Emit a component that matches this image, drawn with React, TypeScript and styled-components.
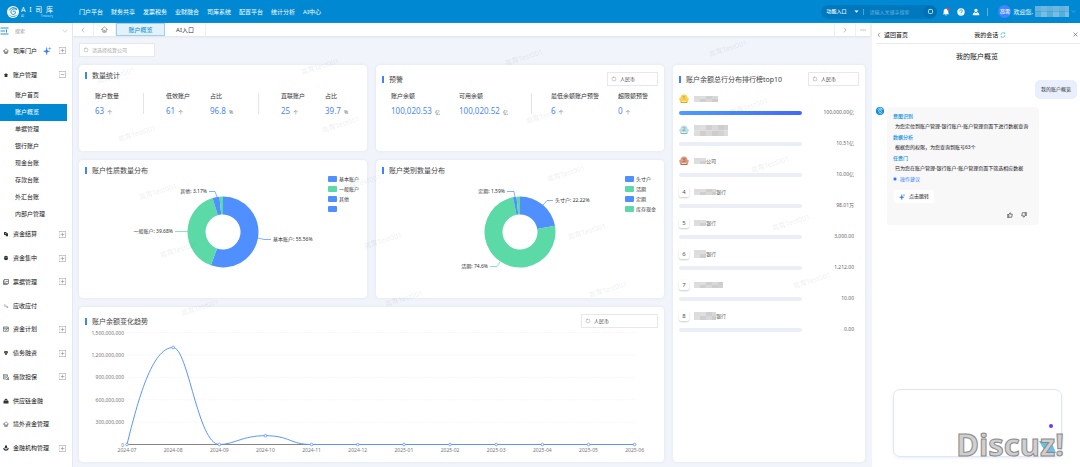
import React from "react";
import styled, { createGlobalStyle, css } from "styled-components";

const blue = "#0089d2";
const chartBlue = "#4f8fff";
const chartGreen = "#5bd9a6";

const GlobalStyle = createGlobalStyle`
  * { box-sizing: border-box; }
  body {
    margin: 0;
    background: #f1f4fa;
    color: #333;
    font-family: "Noto Sans", "Noto Sans CJK SC", sans-serif;
    font-size: 6px;
    line-height: 1;
  }
  button, input, select, textarea {
    font: inherit;
    color: inherit;
    margin: 0;
    padding: 0;
    border: 0;
    background: none;
    outline: 0;
  }
  a { color: inherit; text-decoration: none; }
  ul { list-style: none; margin: 0; padding: 0; }
  h1, h2, p { margin: 0; font-weight: 400; }
  svg { display: block; flex: none; }
`;

const Page = styled.div`
  position: relative;
  display: flex;
  flex-direction: column;
  min-height: 100vh;
  overflow: hidden;
  border-bottom: 1px solid #c5d6cc;
`;

/* ---------- top bar ---------- */

const TopBar = styled.header`
  display: flex;
  align-items: center;
  height: 23px;
  padding: 0 4px 0 7px;
  background: ${blue};
  color: #fff;
`;

const Brand = styled.div`
  display: flex;
  align-items: center;
  gap: 2px;
  width: 72px;
`;

const BrandText = styled.div`
  display: flex;
  flex-direction: column;
  width: 32px;
`;

const BrandLine = styled.div<{ $small?: boolean }>`
  display: flex;
  justify-content: space-between;
  font-size: ${(p) => (p.$small ? 3 : 7)}px;
  line-height: ${(p) => (p.$small ? 4 : 8)}px;
  opacity: ${(p) => (p.$small ? 0.7 : 1)};
`;

const TopNav = styled.nav`
  display: flex;
  flex: 1;
  gap: 8px;
  white-space: nowrap;
`;

const SearchPill = styled.div`
  display: flex;
  align-items: center;
  width: 116px;
  height: 14px;
  padding-left: 5px;
  border-radius: 7px;
  background: #0078bd;
  font-size: 5px;
`;

const EntrySelect = styled.select`
  appearance: none;
  width: 28px;
  font-weight: 500;
`;

const SearchField = styled.input`
  flex: 1;
  min-width: 0;
  margin-left: 4px;
  padding-left: 5px;
  border-left: 1px solid #4ba5d6;
  &::placeholder { color: #67b4de; opacity: 1; }
`;

const SearchButton = styled.button`
  display: flex;
  align-items: center;
  justify-content: center;
  width: 14px;
  height: 12px;
  border-radius: 6px;
  background: #0070b4;
`;

const TopActions = styled.div`
  display: flex;
  align-items: center;
  gap: 7px;
  padding: 0 7px 0 5px;
  border-right: 1px solid #5cb3e0;
`;

const IconButton = styled.button`
  display: flex;
  align-items: center;
  justify-content: center;
`;

const UserMenu = styled.div`
  display: flex;
  align-items: center;
  gap: 2px;
  padding-left: 10px;
`;

const UserBadge = styled.span`
  display: flex;
  align-items: center;
  justify-content: center;
  width: 13px;
  height: 13px;
  border-radius: 50%;
  background: #4285ff;
  font-size: 5px;
  font-weight: 500;
`;

/* ---------- side bar ---------- */

const Body = styled.div`
  display: flex;
  flex: 1;
`;

const SideBar = styled.aside`
  display: flex;
  flex-direction: column;
  flex: none;
  width: 73px;
  padding-bottom: 7px;
  background: #fff;
  border-right: 1px solid #e3e9f2;
`;

const SideSearch = styled.div`
  display: flex;
  align-items: center;
  height: 16px;
  padding-right: 4px;
`;

const SideSearchInput = styled.input`
  flex: 1;
  min-width: 0;
  margin-left: 6px;
  font-size: 5px;
  &::placeholder { color: #999; opacity: 1; }
`;

const SideNav = styled.nav`
  display: flex;
  flex: 1;
  flex-direction: column;
`;

const SideItem = styled.button`
  display: flex;
  flex: 1 0 20px;
  align-items: center;
  padding: 0 6px 0 3px;
  color: #111;
  text-align: left;
  white-space: nowrap;
`;

const SideLabel = styled.span`
  flex: 1;
  display: flex;
  align-items: center;
  gap: 6px;
  margin-left: 4px;
`;

const SubLink = styled.a<{ $active?: boolean }>`
  display: flex;
  flex: none;
  align-items: center;
  height: 17px;
  margin-right: 5px;
  padding-left: 15px;
  color: ${(p) => (p.$active ? "#fff" : "#222")};
  background: ${(p) => (p.$active ? blue : "transparent")};
`;

/* ---------- centre ---------- */

const Main = styled.main`
  display: flex;
  flex: 1;
  flex-direction: column;
  min-width: 0;
`;

const TabBar = styled.div`
  display: flex;
  flex: none;
  height: 13px;
  background: #fff;
  box-shadow: 0 1px 2px #dde3ec;
`;

const Tab = styled.button<{ $w: number; $active?: boolean }>`
  display: flex;
  align-items: center;
  justify-content: center;
  width: ${(p) => p.$w}px;
  border-right: 1px solid #edf0f4;
  ${(p) =>
    p.$active &&
    css`
      border: 1px solid #9ad2ee;
      background: #e2f1fa;
      color: ${blue};
    `}
`;

const TabSpace = styled.div`
  flex: 1;
  border-right: 1px solid #edf0f4;
`;

const Content = styled.div`
  display: flex;
  flex: 1;
  flex-direction: column;
  gap: 8px;
  padding: 7px 6px 5px;
`;

const FieldBox = styled.label<{ $w: number }>`
  display: flex;
  flex: none;
  align-items: center;
  gap: 3px;
  width: ${(p) => p.$w}px;
  height: 14px;
  padding-left: 3px;
  border: 1px solid #e6e8ee;
  background: #fff;
  font-size: 5px;
  select, input { appearance: none; flex: 1; min-width: 0; }
  input::placeholder { color: #aaa; opacity: 1; }
`;

const Dashboard = styled.div`
  display: grid;
  flex: 1;
  grid-template-columns: 3fr 3fr 2fr;
  grid-template-rows: 86px 138px minmax(154px, 1fr);
  gap: 9px;
`;

const Card = styled.section<{ $area?: string }>`
  display: flex;
  flex-direction: column;
  min-width: 0;
  grid-area: ${(p) => p.$area ?? "auto"};
  border-radius: 4px;
  background: #fff;
  box-shadow: 0 0 3px #d9e2f1;
`;

const CardHead = styled.div`
  display: flex;
  align-items: center;
  justify-content: space-between;
  padding: 7px 6px 0;
`;

const CardTitle = styled.h2`
  padding-left: 5px;
  border-left: 2px solid #3f82ff;
  font-size: 7px;
  line-height: 7px;
  color: #444;
`;

const StatRow = styled.div<{ $cols: string; $top: number; $side: number }>`
  display: grid;
  grid-template-columns: ${(p) => p.$cols};
  padding: ${(p) => `${p.$top}px ${p.$side}px 0`};
`;

const StatGroup = styled.div<{ $pad?: number }>`
  display: flex;
  min-width: 0;
  height: 21px;
  padding-left: ${(p) => p.$pad ?? 0}px;
  border-left: ${(p) => (p.$pad ? 1 : 0)}px solid #e2e4ea;
`;

const Stat = styled.div<{ $w: number }>`
  display: flex;
  flex: none;
  flex-direction: column;
  gap: 7px;
  width: ${(p) => p.$w}px;
  white-space: nowrap;
`;

const StatValue = styled.p`
  display: flex;
  align-items: baseline;
  gap: 3px;
  color: #4c88f8;
  font-size: 8px;
  line-height: 10px;
  small { color: #666; font-size: 5px; }
`;

const Chart = styled.svg`
  width: 100%;
  flex: 1;
  font-size: 5px;
  overflow: visible;
`;

const RankList = styled.ul`
  padding: 7px 11px 0 6px;
`;

const RankRow = styled.li`
  height: 31px;
`;

const RankName = styled.div`
  display: flex;
  align-items: center;
  gap: 5px;
  height: 12px;
  font-size: 5px;
  color: #555;
  > span { display: flex; align-items: center; }
`;

const RankNumber = styled.b`
  width: 10px;
  border-radius: 2px;
  box-shadow: 0 1px 2px #ccc;
  color: #555;
  font-size: 6px;
  font-weight: 400;
  line-height: 10px;
  text-align: center;
`;

const RankValue = styled.div`
  display: flex;
  align-items: center;
  justify-content: space-between;
  height: 15px;
  font-size: 5px;
  color: #666;
`;

const Track = styled.div<{ $full: boolean }>`
  width: 70%;
  height: 4px;
  border-radius: 2px;
  background: ${(p) => (p.$full ? "linear-gradient(90deg, #4c9dff, #4368fb)" : "#ebeef7")};
`;

/* ---------- assistant ---------- */

const Assistant = styled.aside`
  display: flex;
  flex: none;
  flex-direction: column;
  width: 208px;
  margin-left: 1px;
  background: #fff;
`;

const AssistantHead = styled.div`
  display: grid;
  grid-template-columns: 12fr auto 9fr;
  align-items: center;
  height: 21px;
  margin-left: 4px;
  padding-top: 3px;
  border-bottom: 1px solid #e9ebef;
  color: #111;
  > :last-child { justify-self: end; padding-right: 2px; }
`;

const HeadPart = styled.button`
  display: flex;
  align-items: center;
  gap: 2px;
`;

const ChatTitle = styled.h1`
  margin: 8px 0 0 2px;
  font-size: 7px;
  line-height: 9px;
  text-align: center;
  color: #111;
`;

const Question = styled.p`
  align-self: flex-end;
  margin: 19px 3px 8px;
  padding: 0 6px;
  border-radius: 5px;
  background: #e9effd;
  font-size: 5px;
  line-height: 19px;
`;

const AnswerRow = styled.div`
  display: flex;
  align-items: flex-start;
  gap: 3px;
  padding-left: 4px;
`;

const Answer = styled.div`
  width: 152px;
  height: 118px;
  padding: 4px 6px;
  border-radius: 4px;
  background: #f8f8f9;
  font-size: 5px;
  line-height: 11px;
  white-space: nowrap;
  color: #111;
`;

const StepTitle = styled.p`
  color: #1292e0;
  line-height: 10px;
  font-weight: 500;
`;

const StepText = styled.p`
  padding-left: 2px;
`;

const Suggest = styled.p`
  display: flex;
  align-items: center;
  gap: 3px;
  color: #3b7cff;
  line-height: 10px;
`;

const JumpButton = styled.button`
  display: flex;
  align-items: center;
  gap: 4px;
  height: 13px;
  margin: 6px 0 0 1px;
  padding: 0 5px;
  border-radius: 2px;
  background: #fff;
  line-height: 1;
`;

const Votes = styled.div`
  display: flex;
  justify-content: flex-end;
  gap: 8px;
  margin-top: 9px;
  padding-right: 6px;
`;

const Composer = styled.div`
  position: relative;
  display: flex;
  height: 68px;
  margin: auto 18px 10px 21px;
  border: 1px solid #e1e6f4;
  border-radius: 7px;
  box-shadow: 0 1px 3px #e8edf8;
  textarea { flex: 1; padding: 6px; resize: none; }
`;

const SendButton = styled.button`
  position: absolute;
  right: 3px;
  bottom: 1px;
`;

const ForumMark = styled.span`
  position: absolute;
  right: -3px;
  bottom: -4px;
  color: #cfcfcf;
  font-family: "Noto Sans", sans-serif;
  font-size: 31px;
  font-weight: 700;
  line-height: 32px;
  -webkit-text-stroke: 1px #8a8a8a;
  pointer-events: none;
`;

const MarkLayer = styled.svg`
  position: absolute;
  inset: 0;
  width: 100%;
  height: 100%;
  pointer-events: none;
  font-size: 7px;
  fill: #5a6070;
  fill-opacity: 0.12;
`;

/* ---------- small drawings ---------- */

const Swirl = ({ size, white }: { size: number; white?: boolean }) => (
  <svg width={size} height={size} viewBox="0 0 24 24">
    <circle cx="12" cy="12" r="12" fill={white ? "#fff" : blue} />
    <path
      d="M5 8C8 2 16 2 20 7C14 4 7 7 8 13C9 18 16 18 17 13C17 10 14 9 12 11"
      fill="none"
      stroke={white ? blue : "#fff"}
      strokeWidth="2"
      strokeLinecap="round"
    />
    <path d="M1 13C4 20 13 23 22 16C18 24 6 25 1 13Z" fill={white ? blue : "#fff"} opacity="0.7" />
  </svg>
);

const Line = ({ d, size = 7, color = "#777", w = 2, fill = "none" }: { d: string; size?: number; color?: string; w?: number; fill?: string }) => (
  <svg width={size} height={size} viewBox="0 0 24 24" fill={fill} stroke={color} strokeWidth={w} strokeLinejoin="round" strokeLinecap="round">
    <path d={d} />
  </svg>
);

const Solid = ({ d, size = 6, color = "#333" }: { d: string; size?: number; color?: string }) => (
  <svg width={size} height={size} viewBox="0 0 24 24" fill={color} fillRule="evenodd">
    <path d={d} />
  </svg>
);

const HOME = "M2 12L12 3L22 12H18V21H6V12Z M10 21V15H14V21";
const SPARK = "M11 3C11.500 10 13 12.500 20 13C13 13.500 11.500 16 11 23C10.500 16 9 13.500 2 13C9 12.500 10.500 10 11 3Z M20 2V7M17.500 4.500H22.500";
const RING = "M9 5H15Q19 5 19 9V15Q19 19 15 19H9Q5 19 5 15V9Q5 5 9 5Z";

const Toggle = ({ open }: { open?: boolean }) => (
  <Line d={open ? "M1 1H23V23H1Z M7 12H17" : "M1 1H23V23H1Z M7 12H17 M12 7V17"} color="#8b8b8b" />
);

const Medal = ({ tone, dark, n }: { tone: string; dark: string; n: number }) => (
  <svg width="10" height="10" viewBox="0 0 20 20">
    <path d="M0 9L5 7L6 16H14L15 7L20 9L17 18H3Z" fill={tone} />
    <circle cx="10" cy="8" r="7" fill={tone} />
    <path d="M4 17H16" stroke={dark} strokeWidth="2" opacity="0.6" />
    <text x="10" y="12" fontSize="10" textAnchor="middle" fill={dark}>{n}</text>
  </svg>
);

const shades = ["#dcdcdc", "#d2d2d2", "#cdcdcd", "#d8d8d8", "#cfcfcf", "#dedede"];
const tints = ["#62b2dd", "#78bee2", "#6cb8e0", "#58aedb"];

const Mosaic = ({ w, h = 6, tint }: { w: number; h?: number; tint?: boolean }) => (
  <svg width={w} height={h}>
    {Array.from({ length: Math.ceil(w / 6) * 2 }, (_, i) => (
      <rect
        key={i}
        x={(i >> 1) * 6}
        y={(i % 2) * (h / 2)}
        width="6"
        height={h / 2}
        fill={tint ? tints[(i * 3) % 4] : shades[(i * 5 + (i >> 1)) % 6]}
      />
    ))}
  </svg>
);

/* ---------- data ---------- */

const topLinks = ["门户平台", "财务共享", "发票税务", "业财融合", "司库系统", "配置平台", "统计分析", "AI中心"];
const subLinks = ["账户首页", "账户概览", "单据管理", "银行账户", "现金台账", "存款台账", "外汇台账", "内部户管理"];

const sideItems: { label: string; toggle: boolean; icon: React.ReactNode }[] = [
  { label: "资金结算", toggle: true, icon: <Solid d="M4 4H14V9H20V21H11V16H4Z M8 9V12H11V9Z" /> },
  { label: "资金集中", toggle: true, icon: <Solid d="M12 3C17 3 20 6 20 12S17 21 12 21S4 18 4 12S7 3 12 3Z M4 11H20V12H4Z" /> },
  { label: "票据管理", toggle: true, icon: <Line size={6} color="#444" w={2.5} d="M6 2H22V18H6Z M2 7V22H17 M9 13L13 9L16 12L19 8" /> },
  { label: "应收应付", toggle: false, icon: <Line size={6} color="#999" w={2.5} d="M8 6A4 4 0 1 0 12 11 M12 11L19 19 M14 18A3 3 0 1 0 17 13" /> },
  { label: "资金计划", toggle: true, icon: <Line size={6} color="#444" w={2.5} d="M3 4H21V21H3Z M3 9H21 M8 14L11 17L16 12" /> },
  { label: "债务融资", toggle: true, icon: <Solid d="M6 4H18L20 13H15V20H9V13H4Z M10 7V10H14V7Z" /> },
  { label: "借款担保", toggle: true, icon: <Line size={6} color="#555" w={2.5} d="M2 3H18V12 M2 3V20H11 M6 8H14 M6 13H11 M14 14L22 22 M22 14V22H14" /> },
  { label: "供应链金融", toggle: false, icon: <Solid d="M2 22V11H6V7L12 2L18 7V11H22V22Z M10 8H14V11H10Z" /> },
  { label: "境外资金管理", toggle: false, icon: <Line size={6} color="#666" w={2.5} d={HOME} /> },
  { label: "金融机构管理", toggle: true, icon: <Solid d="M8 2H16V8H19L12 15L5 8H8Z M1 12H4L12 19L20 12H23C23 19 18 23 12 23S1 19 1 12Z" /> },
];

const ranks: { w: number; h?: number; text: string; value: string }[] = [
  { w: 24, text: "", value: "100,000.00亿" },
  { w: 34, h: 11, text: "", value: "10.51亿" },
  { w: 12, text: "公司", value: "10.00亿" },
  { w: 22, text: "银行", value: "98.01万" },
  { w: 12, text: "银行", value: "3,000.00" },
  { w: 12, h: 8, text: "银行", value: "1,212.00" },
  { w: 29, text: "", value: "10.00" },
  { w: 22, h: 8, text: "银行", value: "0.00" },
];

const medals = [
  { tone: "#f9d04f", dark: "#c08a10" },
  { tone: "#bfdde2", dark: "#5f98a3" },
  { tone: "#dc9a80", dark: "#9a4a30" },
];

type Slice = { share: number; color: string };
type Callout = { text: string; x: number; y: number; end?: boolean; line: string; color: string };

const arc = (from: number, to: number) => {
  const at = (t: number, r: number) =>
    `${(144 + r * Math.sin(t * 2 * Math.PI)).toFixed(2)} ${(72 - r * Math.cos(t * 2 * Math.PI)).toFixed(2)}`;
  const big = to - from > 0.5 ? 1 : 0;
  return `M${at(from, 35.5)}A35.5 35.5 0 ${big} 1 ${at(to, 35.5)}L${at(to, 17.5)}A17.5 17.5 0 ${big} 0 ${at(from, 17.5)}Z`;
};

const Donut = ({ slices, callouts, legend, label }: { slices: Slice[]; callouts: Callout[]; legend: [string, string][]; label: string }) => {
  let sum = 0;
  return (
    <Chart viewBox="0 14 288 124" role="img" aria-label={label}>
      {slices.map((s, i) => {
        const from = sum;
        sum += s.share / 100;
        return <path key={i} d={arc(from, Math.min(sum, 1))} fill={s.color} />;
      })}
      {callouts.map((c) => (
        <g key={c.text}>
          <path d={c.line} fill="none" stroke={c.color} strokeWidth="0.7" />
          <text x={c.x} y={c.y} fill="#333" textAnchor={c.end ? "end" : "start"}>{c.text}</text>
        </g>
      ))}
      {legend.map(([text, color], i) => (
        <g key={i}>
          <rect x="249" y={16 + i * 10} width="9" height="6" rx="1" fill={color} />
          <text x="260" y={21 + i * 10} fill="#333">{text}</text>
        </g>
      ))}
    </Chart>
  );
};

const months = ["2024-07", "2024-08", "2024-09", "2024-10", "2024-11", "2024-12", "2025-01", "2025-02", "2025-03", "2025-04", "2025-05", "2025-06"];
const amounts = ["0", "300,000,000", "600,000,000", "900,000,000", "1,200,000,000", "1,500,000,000"];
const monthX = (i: number) => 48 + i * 46.15;
const monthY = (i: number) => (i === 1 ? 40.5 : i === 3 ? 128.7 : 137.5);

const Trend = () => (
  <Chart viewBox="0 21 585 134" role="img" aria-label="账户余额变化趋势">
    {amounts.map((a, i) => (
      <g key={a}>
        {i > 0 && <path d={`M48 ${137.5 - i * 22.4}H556`} stroke="#edf0f5" strokeWidth="0.6" strokeDasharray="2 1" />}
        <text x="45" y={139.5 - i * 22.4} textAnchor="end" fill="#777">{a}</text>
      </g>
    ))}
    <path d="M48 137.500H556" stroke="#666" strokeWidth="0.8" />
    <path
      d="M48 137.500C59 93 73 40.500 94.150 40.500C109 40.500 119 137.500 140.300 137.500C155 137.500 163 128.700 186.450 128.700C211 128.700 211 137.500 232.600 137.500H555.650"
      fill="none"
      stroke="#5a94ff"
      strokeWidth="1"
    />
    {months.map((m, i) => (
      <g key={m}>
        <circle cx={monthX(i)} cy={monthY(i)} r="1.3" fill="#fff" stroke="#5a94ff" strokeWidth="0.8" />
        <text x={monthX(i)} y="145" textAnchor="middle" fill="#777">{m}</text>
      </g>
    ))}
  </Chart>
);

const Currency = ({ w = 51 }: { w?: number }) => (
  <FieldBox $w={w}>
    <Line d={RING} size={6} color="#999" />
    <select aria-label="币种"><option>人民币</option></select>
  </FieldBox>
);

const StatItem = ({ w, label, value, unit }: { w: number; label: string; value: string; unit: string }) => (
  <Stat $w={w}>
    <span>{label}</span>
    <StatValue>{value}<small>{unit}</small></StatValue>
  </Stat>
);

const marks = Array.from({ length: 4 }, (_, c) => Array.from({ length: 6 }, (_, r) => [95 + c * 204 + r * 21, 18 - c * 9 + r * 58]))
  .flat()
  .filter(([x, y]) => x < 840 && y > 8);

export default function App() {
  return (
    <Page>
      <GlobalStyle />
      <TopBar>
        <Brand>
          <Swirl size={12} white />
          <BrandText>
            <BrandLine><span>A</span><span>I</span><span>司</span><span>库</span></BrandLine>
            <BrandLine $small><span>AI</span><span>Treasury</span></BrandLine>
          </BrandText>
        </Brand>
        <TopNav>
          {topLinks.map((t) => <a key={t} href="#top">{t}</a>)}
        </TopNav>
        <SearchPill>
          <EntrySelect aria-label="入口"><option>功能入口</option></EntrySelect>
          <Solid d="M2 7H22L12 18Z" size={5} color="#fff" />
          <SearchField aria-label="搜索" placeholder="请输入关键字搜索" />
          <SearchButton aria-label="搜索"><Line d={RING} size={7} color="#d7efff" w={3} /></SearchButton>
        </SearchPill>
        <TopActions>
          <IconButton aria-label="通知">
            <svg width="8" height="8" viewBox="0 0 24 24">
              <path d="M12 2C6 2 5 7 5 11V16L2 19H22L19 16V11C19 7 18 2 12 2ZM9 20H15L12 23Z" fill="#fff" />
              <circle cx="19" cy="4" r="4" fill="#f5403a" />
            </svg>
          </IconButton>
          <IconButton aria-label="帮助">
            <svg width="8" height="8" viewBox="0 0 24 24">
              <circle cx="12" cy="12" r="11" fill="#fff" />
              <path d="M8 10C8 4 16 4 16 9C16 12 12 12 12 15M12 17V19" fill="none" stroke={blue} strokeWidth="2.4" />
            </svg>
          </IconButton>
          <IconButton aria-label="用户">
            <Solid d="M12 2A5 5 0 1 1 11.900 2Z M2 22C2 15 6 13 9 13L12 16L15 13C19 13 22 15 22 22Z" size={8} color="#fff" />
          </IconButton>
        </TopActions>
        <UserMenu>
          <UserBadge>高霄</UserBadge>
          <span>欢迎您,</span>
          <Mosaic w={34} h={11} tint />
          <Line d="M4 8L12 16L20 8" size={5} color="#8ccbee" />
        </UserMenu>
      </TopBar>

      <Body>
        <SideBar>
          <SideSearch>
            <svg width="9" height="8" viewBox="0 0 18 16" stroke="#2597dc" strokeWidth="2">
              <path d="M1 2H17M1 8H10M1 14H17M13 5V11" />
            </svg>
            <SideSearchInput aria-label="搜索菜单" placeholder="搜索" />
            <Line d="M3 8L12 17L21 8" size={6} color="#aaa" />
          </SideSearch>
          <SideNav>
            <SideItem>
              <Line d={HOME} size={6} color="#555" w={2.5} />
              <SideLabel>司库门户<Line d={SPARK} size={8} color="#2e73f8" fill="#2e73f8" w={1.5} /></SideLabel>
              <Toggle />
            </SideItem>
            <SideItem>
              <Solid d="M12 4L15 8L20 9L17 14L18 20H6L7 14L4 9L9 8Z" />
              <SideLabel>账户管理</SideLabel>
              <Toggle open />
            </SideItem>
            {subLinks.map((s) => <SubLink key={s} href="#sub" $active={s === "账户概览"}>{s}</SubLink>)}
            {sideItems.map((s) => (
              <SideItem key={s.label}>
                {s.icon}
                <SideLabel>{s.label}</SideLabel>
                {s.toggle && <Toggle />}
              </SideItem>
            ))}
          </SideNav>
        </SideBar>

        <Main>
          <TabBar>
            <Tab $w={21} aria-label="向左"><Line d="M15 4L8 12L15 20" size={6} /></Tab>
            <Tab $w={22} aria-label="首页"><Line d={HOME} /></Tab>
            <Tab $w={49} $active>账户概览</Tab>
            <Tab $w={41}>AI入口</Tab>
            <TabSpace />
            <Tab $w={21} aria-label="向右"><Line d="M9 4L16 12L9 20" size={6} /></Tab>
            <Tab $w={15} aria-label="更多"><Line d="M4 12H5M12 12H13M20 12H21" size={6} w={3} /></Tab>
          </TabBar>
          <Content>
            <FieldBox $w={76}>
              <Line d={RING} size={6} color="#999" />
              <input aria-label="核算公司" placeholder="请选择核算公司" />
            </FieldBox>
            <Dashboard>
              <Card>
                <CardHead><CardTitle>数量统计</CardTitle></CardHead>
                <StatRow $cols="48fr 115fr 93fr" $top={14} $side={16}>
                  <StatGroup><StatItem w={44} label="账户数量" value="63" unit="个" /></StatGroup>
                  <StatGroup $pad={22}>
                    <StatItem w={44} label="低效账户" value="61" unit="个" />
                    <StatItem w={32} label="占比" value="96.8" unit="%" />
                  </StatGroup>
                  <StatGroup $pad={22}>
                    <StatItem w={44} label="直联账户" value="25" unit="个" />
                    <StatItem w={32} label="占比" value="39.7" unit="%" />
                  </StatGroup>
                </StatRow>
              </Card>
              <Card>
                <CardHead><CardTitle>预警</CardTitle><Currency /></CardHead>
                <StatRow $cols="140fr 118fr" $top={7} $side={15}>
                  <StatGroup>
                    <StatItem w={68} label="账户余额" value="100,020.53" unit="亿" />
                    <StatItem w={68} label="可用余额" value="100,020.52" unit="亿" />
                  </StatGroup>
                  <StatGroup $pad={19}>
                    <StatItem w={67} label="最低余额账户预警" value="6" unit="个" />
                    <StatItem w={32} label="超限额预警" value="0" unit="个" />
                  </StatGroup>
                </StatRow>
              </Card>
              <Card $area="1 / 3 / 4 / 4">
                <CardHead><CardTitle>账户余额总行分布排行榜top10</CardTitle><Currency /></CardHead>
                <RankList>
                  {ranks.map((r, i) => (
                    <RankRow key={i}>
                      <RankName>
                        {i < 3 ? <Medal {...medals[i]} n={i + 1} /> : <RankNumber>{i + 1}</RankNumber>}
                        <span><Mosaic w={r.w} h={r.h} />{r.text}</span>
                      </RankName>
                      <RankValue><Track $full={i === 0} /><span>{r.value}</span></RankValue>
                    </RankRow>
                  ))}
                </RankList>
              </Card>
              <Card>
                <CardHead><CardTitle>账户性质数量分布</CardTitle></CardHead>
                <Donut
                  label="账户性质数量分布"
                  slices={[
                    { share: 55.56, color: chartBlue },
                    { share: 39.68, color: chartGreen },
                    { share: 3.17, color: chartBlue },
                    { share: 1.59, color: chartGreen },
                  ]}
                  callouts={[
                    { text: "基本账户: 55.56%", x: 194, y: 81, line: "M179 78L185 79.500H192", color: chartBlue },
                    { text: "一般账户: 39.68%", x: 94, y: 73, end: true, line: "M96 71.500H109", color: chartGreen },
                    { text: "其他: 3.17%", x: 128, y: 33, end: true, line: "M130 31.500H136L138 37", color: chartBlue },
                  ]}
                  legend={[["基本账户", chartBlue], ["一般账户", chartGreen], ["其他", chartBlue], ["", chartBlue]]}
                />
              </Card>
              <Card>
                <CardHead><CardTitle>账户类别数量分布</CardTitle></CardHead>
                <Donut
                  label="账户类别数量分布"
                  slices={[
                    { share: 22.22, color: chartBlue },
                    { share: 74.6, color: chartGreen },
                    { share: 1.59, color: chartBlue },
                    { share: 1.59, color: chartGreen },
                  ]}
                  callouts={[
                    { text: "头寸户: 22.22%", x: 179, y: 42, line: "M167 45L171 40.500H177", color: chartBlue },
                    { text: "定期: 1.59%", x: 129, y: 33, end: true, line: "M131 31.500H138L139 37", color: chartBlue },
                    { text: "活期: 74.6%", x: 112, y: 108, end: true, line: "M114 106.500H121L124 102", color: chartGreen },
                  ]}
                  legend={[["头寸户", chartBlue], ["活期", chartGreen], ["定期", chartBlue], ["库存现金", chartGreen]]}
                />
              </Card>
              <Card $area="3 / 1 / 4 / 3">
                <CardHead><CardTitle>账户余额变化趋势</CardTitle><Currency w={77} /></CardHead>
                <Trend />
              </Card>
            </Dashboard>
          </Content>
        </Main>

        <Assistant>
          <AssistantHead>
            <HeadPart><Line d="M15 4L8 12L15 20" size={6} color="#444" />返回首页</HeadPart>
            <HeadPart>我的会话<Line d="M4 10A8 8 0 0 1 19 7V3M20 14A8 8 0 0 1 5 17V21" size={6} color="#2aa4e8" w={2.5} /></HeadPart>
            <HeadPart aria-label="关闭"><Line d="M4 4L20 20M20 4L4 20" size={5} color="#555" w={3} /></HeadPart>
          </AssistantHead>
          <ChatTitle>我的账户概览</ChatTitle>
          <Question>我的账户概览</Question>
          <AnswerRow>
            <Swirl size={8} />
            <Answer>
              <StepTitle>意图识别</StepTitle>
              <StepText>为您定位到账户管理-银行账户-账户管理页面下进行数据查询</StepText>
              <StepTitle>数据分析</StepTitle>
              <StepText>根据您的权限，为您查询到账号63个</StepText>
              <StepTitle>任意门</StepTitle>
              <StepText>已为您在账户管理-银行账户-账户管理页面下筛选相应数据</StepText>
              <Suggest>
                <svg width="4" height="4" viewBox="0 0 8 8"><circle cx="4" cy="4" r="4" fill="#a9c8ff" /><circle cx="4" cy="4" r="2.5" fill="#2e73f8" /></svg>
                操作建议
              </Suggest>
              <JumpButton><Line d={SPARK} size={6} color="#2e73f8" fill="#2e73f8" w={1.5} />点击跳转</JumpButton>
              <Votes>
                <IconButton aria-label="赞"><Line d="M2 11H7V21H2Z M7 11L12 3C15 3 15 6 14 9H21L19 21H7" size={6} color="#333" w={2.5} /></IconButton>
                <IconButton aria-label="踩"><Line d="M22 13H17V3H22Z M17 13L12 21C9 21 9 18 10 15H3L5 3H17" size={6} color="#333" w={2.5} /></IconButton>
              </Votes>
            </Answer>
          </AnswerRow>
          <Composer>
            <textarea aria-label="消息" />
            <SendButton aria-label="发送">
              <svg width="20" height="34" viewBox="0 0 20 34">
                <circle cx="13" cy="5" r="2" fill="#6a35ff" />
                <path d="M1 20H13L18 32H8Z" fill="#68bfe8" />
              </svg>
            </SendButton>
            <ForumMark>Discuz!</ForumMark>
          </Composer>
        </Assistant>
      </Body>

      <MarkLayer aria-hidden="true">
        {marks.map(([x, y], i) => (
          <text key={i} x={x} y={y + 2} textAnchor="middle" transform={`rotate(-18 ${x} ${y})`}>高霄Test001</text>
        ))}
      </MarkLayer>
    </Page>
  );
}
